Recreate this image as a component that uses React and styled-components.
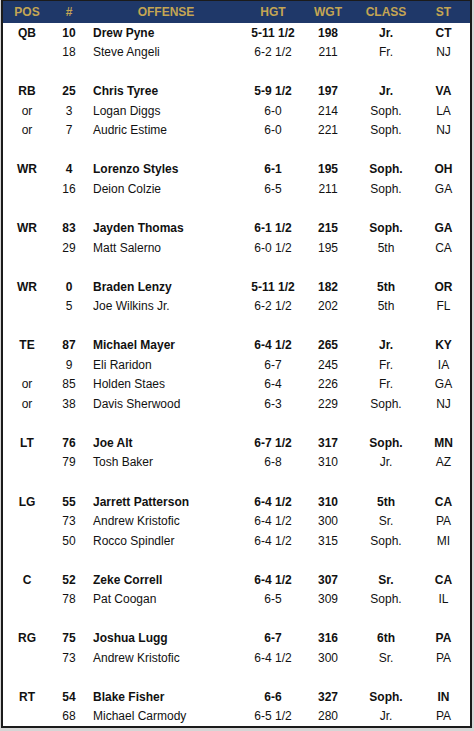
import React from "react";
import styled, { createGlobalStyle } from "styled-components";

const Global = createGlobalStyle`
  html, body { margin: 0; padding: 0; background: #d6d6d6; }
  body { font-family: "Liberation Sans", Arial, sans-serif; }
`;

const Frame = styled.div`
  margin: 0 2px 0 1px;
  width: 467px;
  border: 2px solid #1b1b1b;
  border-top-width: 1px;
  background: #ffffff;
`;

const cols = "48px 36px 158px 56px 54px 62px 53px";

const Header = styled.div`
  display: grid;
  grid-template-columns: ${cols};
  height: 22px;
  background: #1f3869;
  color: #c4a553;
  font-size: 12px;
  font-weight: bold;
  align-items: center;
  text-align: center;
`;

const Row = styled.div`
  display: grid;
  grid-template-columns: ${cols};
  height: 19.54px;
  align-items: center;
  font-size: 12px;
  color: #111;
  font-weight: ${(p) => (p.$bold ? "bold" : "normal")};
`;

const Cell = styled.div`
  text-align: ${(p) => (p.$left ? "left" : "center")};
  padding-left: ${(p) => (p.$left ? "6px" : "0")};
  white-space: nowrap;
`;

const groups = [
  [
    ["QB", "10", "Drew Pyne", "5-11 1/2", "198", "Jr.", "CT"],
    ["", "18", "Steve Angeli", "6-2 1/2", "211", "Fr.", "NJ"],
  ],
  [
    ["RB", "25", "Chris Tyree", "5-9 1/2", "197", "Jr.", "VA"],
    ["or", "3", "Logan Diggs", "6-0", "214", "Soph.", "LA"],
    ["or", "7", "Audric Estime", "6-0", "221", "Soph.", "NJ"],
  ],
  [
    ["WR", "4", "Lorenzo Styles", "6-1", "195", "Soph.", "OH"],
    ["", "16", "Deion Colzie", "6-5", "211", "Soph.", "GA"],
  ],
  [
    ["WR", "83", "Jayden Thomas", "6-1 1/2", "215", "Soph.", "GA"],
    ["", "29", "Matt Salerno", "6-0 1/2", "195", "5th", "CA"],
  ],
  [
    ["WR", "0", "Braden Lenzy", "5-11 1/2", "182", "5th", "OR"],
    ["", "5", "Joe Wilkins Jr.", "6-2 1/2", "202", "5th", "FL"],
  ],
  [
    ["TE", "87", "Michael Mayer", "6-4 1/2", "265", "Jr.", "KY"],
    ["", "9", "Eli Raridon", "6-7", "245", "Fr.", "IA"],
    ["or", "85", "Holden Staes", "6-4", "226", "Fr.", "GA"],
    ["or", "38", "Davis Sherwood", "6-3", "229", "Soph.", "NJ"],
  ],
  [
    ["LT", "76", "Joe Alt", "6-7 1/2", "317", "Soph.", "MN"],
    ["", "79", "Tosh Baker", "6-8", "310", "Jr.", "AZ"],
  ],
  [
    ["LG", "55", "Jarrett Patterson", "6-4 1/2", "310", "5th", "CA"],
    ["", "73", "Andrew Kristofic", "6-4 1/2", "300", "Sr.", "PA"],
    ["", "50", "Rocco Spindler", "6-4 1/2", "315", "Soph.", "MI"],
  ],
  [
    ["C", "52", "Zeke Correll", "6-4 1/2", "307", "Sr.", "CA"],
    ["", "78", "Pat Coogan", "6-5", "309", "Soph.", "IL"],
  ],
  [
    ["RG", "75", "Joshua Lugg", "6-7", "316", "6th", "PA"],
    ["", "73", "Andrew Kristofic", "6-4 1/2", "300", "Sr.", "PA"],
  ],
  [
    ["RT", "54", "Blake Fisher", "6-6", "327", "Soph.", "IN"],
    ["", "68", "Michael Carmody", "6-5 1/2", "280", "Jr.", "PA"],
  ],
];

export default function App() {
  const rows = [];
  groups.forEach((g, gi) => {
    if (gi > 0) rows.push(<Row key={`b${gi}`} />);
    g.forEach((r, ri) => {
      rows.push(
        <Row key={`${gi}-${ri}`} $bold={ri === 0}>
          <Cell>{r[0]}</Cell>
          <Cell>{r[1]}</Cell>
          <Cell $left>{r[2]}</Cell>
          <Cell>{r[3]}</Cell>
          <Cell>{r[4]}</Cell>
          <Cell>{r[5]}</Cell>
          <Cell>{r[6]}</Cell>
        </Row>
      );
    });
  });
  return (
    <>
      <Global />
      <Frame>
        <Header>
          <Cell>POS</Cell>
          <Cell>#</Cell>
          <Cell>OFFENSE</Cell>
          <Cell>HGT</Cell>
          <Cell>WGT</Cell>
          <Cell>CLASS</Cell>
          <Cell>ST</Cell>
        </Header>
        {rows}
      </Frame>
    </>
  );
}
